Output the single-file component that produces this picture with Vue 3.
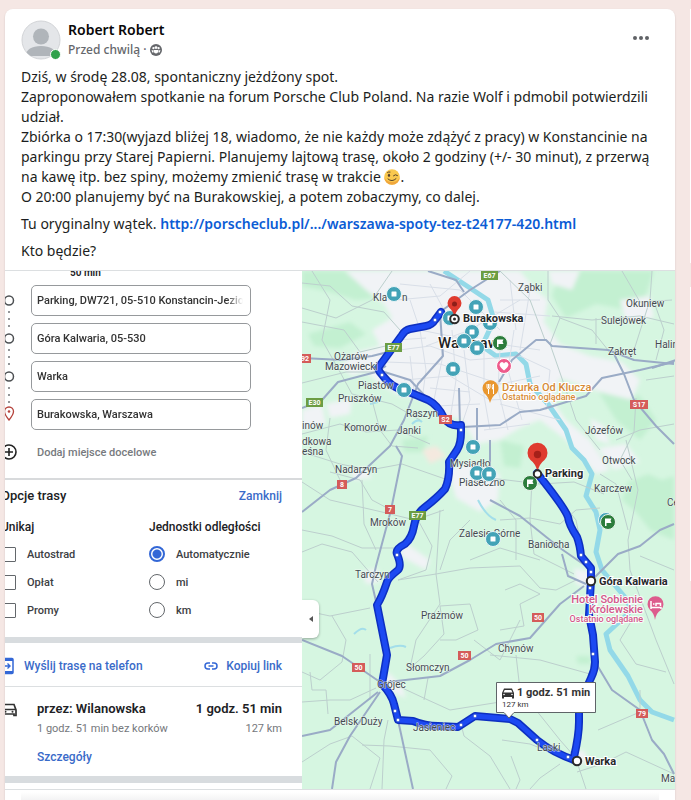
<script setup>
import { ref } from 'vue'

const stops = ref([
  { id: 'stop-1', label: 'Punkt początkowy', value: 'Parking, DW721, 05-510 Konstancin-Jeziorna' },
  { id: 'stop-2', label: 'Przystanek 1', value: 'Góra Kalwaria, 05-530' },
  { id: 'stop-3', label: 'Przystanek 2', value: 'Warka' },
  { id: 'stop-4', label: 'Miejsce docelowe', value: 'Burakowska, Warszawa' },
])
const avoid = ref([])
const avoidOptions = ['Autostrad', 'Opłat', 'Promy']
const unit = ref('Automatycznie')
const unitOptions = ['Automatycznie', 'mi', 'km']

const urban = [
  'M345 271H520L536 290 548 300 544 322 560 344 590 356 622 362 640 380 632 400 600 392 560 378 552 400 566 420 590 440 610 470 596 474 566 440 540 420 520 428 500 440 476 444 462 420 440 414 426 400 400 396 380 384 366 372 352 376 340 366 356 352 380 346 372 330 392 318 384 304 366 290Z',
  'M548 271H580L572 290 552 284Z',
  'M448 470 470 462 500 474 498 500 480 512 456 498Z',
  'M404 542 430 560 426 570 400 556Z',
  'M388 672 402 686 406 698 392 692 384 684Z',
  'M574 568 592 572 590 588 576 584Z',
  'M326 404 352 398 350 414 330 418Z',
  'M620 300 650 296 654 318 626 322Z',
  'M590 418 604 426 610 444 596 440Z',
  'M598 448 626 444 640 462 614 470Z',
  'M362 572 378 568 380 582 366 584Z',
  'M574 752 584 750 588 760 580 766Z',
  'M350 470 366 468 372 478 354 480Z',
  'M302 410 322 404 326 424 302 430Z',
]
const woods = [
  'M302 271H366L384 284 376 298 356 300 330 292 302 286Z',
  'M628 482 648 474 662 480 674 476V540L650 530 636 512 622 500Z',
  'M560 271H654L640 312 596 304 566 318 552 296Z',
  'M500 440 524 446 520 468 504 466Z',
  'M308 334 350 322 366 334 340 348 314 346Z',
  'M576 656 590 656 592 664 578 664Z',
  'M402 440 428 436 424 452 404 452Z',
  'M590 378 612 388 640 396 656 420 640 440 616 420Z',
]
const minorRoads = [
  'M302 283 330 286 352 306 384 312 400 330', 'M302 308 336 318 372 300 392 271', 'M312 271 330 300 322 340 340 372',
  'M302 322 344 330 360 352 394 344', 'M302 383 346 372 382 372', 'M340 372 352 394 392 404 420 420',
  'M302 434 340 424 366 432 398 430 430 444', 'M330 418 326 450 340 480', 'M372 400 380 430 392 446 418 448',
  'M302 452 340 464 370 470 402 464 448 480', 'M302 482 330 500 382 512 415 520 444 510', 'M330 472 360 480 372 500 391 510',
  'M302 530 332 536 362 548 402 548', 'M302 552 322 544 352 552 378 582', 'M362 480 364 524 376 550', 'M418 520 432 546 426 570 398 580',
  'M398 580 436 574 470 568 520 566 540 588', 'M440 510 436 574 440 604 416 640 410 668', 'M470 520 450 540 440 570',
  'M302 610 330 616 370 608', 'M332 616 346 640 342 662 320 680 302 672', 'M310 672 312 690 326 690 328 714',
  'M370 654 370 700', 'M302 702 330 700 350 700 376 688', 'M302 762 330 744 352 736 380 758 370 789',
  'M362 745 390 746 430 750 452 776 446 789', 'M388 720 384 740 382 789', 'M462 728 464 736 490 756 510 789',
  'M398 686 428 700 450 710 500 702 516 690', 'M428 678 424 700', 'M410 668 424 656 444 634 440 606 470 604 478 630 456 640 440 640',
  'M520 620 500 660 474 640', 'M490 655 540 660 590 674', 'M516 655 520 690 560 740 574 756', 'M502 740 530 744 560 756',
  'M511 756 520 780 516 789', 'M505 590 520 584 540 594 520 604 524 626 500 630', 'M540 588 556 590 576 580',
  'M532 480 530 520 534 554 574 574', 'M500 520 530 518 560 524 576 510 600 508', 'M490 478 540 484 574 482 604 494',
  'M560 500 576 520 584 560', 'M616 440 640 430 674 424', 'M552 316 592 320 640 316 674 324', 'M560 318 550 344 566 390 576 420 600 450',
  'M548 271 548 300 560 318 592 330 608 350', 'M652 271 650 300 634 350', 'M596 318 596 344', 'M640 302 672 300', 'M654 302 664 330 656 360',
  'M636 398 634 432 620 460 632 480', 'M646 380 674 376', 'M500 271 530 300 545 340', 'M622 271 640 302', 'M626 440 638 490 628 540 630 570',
  'M600 474 616 484 628 530', 'M598 730 640 712 640 690', 'M577 762 586 789', 'M560 764 540 778 530 789', 'M577 772 602 764 626 752 674 774',
  'M632 620 620 640 636 664 666 672', 'M630 570 656 640 674 684', 'M640 556 674 570', 'M540 560 500 548 470 560', 'M500 500 516 520 516 560',
]
const streets = [
  'M400 284 460 290 500 330', 'M396 300 440 296 470 271', 'M384 352 430 346 470 360 520 356', 'M386 362 440 364 500 384 540 376',
  'M404 380 450 376 490 400 530 398', 'M420 330 426 370 422 400', 'M440 320 442 360 434 400', 'M452 330 456 380 450 420',
  'M464 350 470 400 462 424', 'M484 350 484 396 490 430', 'M500 350 498 390 508 430', 'M514 330 508 370 522 420', 'M426 346 470 330 520 300',
  'M410 300 420 330 470 340 540 350', 'M430 284 444 310', 'M500 300 540 300', 'M510 280 516 330', 'M530 290 520 350', 'M520 356 550 370 546 410',
  'M500 404 560 420', 'M484 430 530 424', 'M396 340 426 338', 'M410 356 414 390', 'M430 388 470 392', 'M436 406 480 404', 'M494 312 550 316',
]
const highways = [
  'M302 358 342 360 372 356 396 350', 'M302 408 322 400 338 382 376 372 386 366', 'M378 370 410 380 440 412 450 426',
  'M302 512 330 490 356 478 390 446 404 420 418 384 443 356 440 312', 'M396 446 402 456 391 510 376 566 372 584 378 610',
  'M463 427 500 425 520 412 540 410 586 396 602 378 640 370 674 362', 'M440 312 470 290 500 271', 'M428 271 456 280 464 292',
  'M499 382 512 360 536 340 546 340 552 346 608 350 634 360 674 364', 'M614 354 624 374 634 400 656 426 674 444',
  'M490 440 490 480M459 388 460 426M477 408 477 440', 'M490 500 520 516 560 548 586 566',
  'M302 640 342 656 380 682', 'M388 682 440 676 470 660 496 644 530 638 560 604 584 586',
  'M594 578 618 554 640 546 660 530 674 524', 'M597 665 612 690 640 710 652 740 664 754 674 774', 'M398 720 413 789',
  'M380 692 350 736 336 762 332 789', 'M302 736 330 730 378 692', 'M562 554 568 576 586 584', 'M676 360 652 368',
]
const river = 'M444 271 470 288 488 300 494 320 482 346 496 356 516 354 526 364 530 384 548 404 566 430 572 448 584 460 592 474 586 496 596 512 600 530 596 552 602 570 624 596 632 610 606 634 610 650 628 676 640 700 652 712 674 720'
const loop = 'M441 312 435 320Q432 325 426 326L410 329Q405 330 402 335L378 368Q379 372 383 376 392 388 404 390L428 400Q438 405 444 418 450 427 461 425L461 432Q461 444 457 450L449 462Q450 478 445 489 437 498 424 508 416 514 414 526 412 538 405 544 395 549 397 554 402 566 398 570 388 578 387 582 382 597 377 605L387 655 382 684Q392 695 394 704L398 720 413 721Q425 726 438 726L458 727 475 716 510 719 518 723 537 740Q553 753 577 761'
const east = 'M574 757Q579 735 579 722V705L591 678Q595 670 595 662L593 635 589 615 591 580V568Q586 562 581 556 580 545 577 537 569 525 568 517 565 508 537 473'

const shields = [
  { x: 481, y: 271, w: 17, text: 'E67', color: '#6c9d43' },
  { x: 385, y: 343, w: 17, text: 'E77', color: '#6c9d43' },
  { x: 306, y: 398, w: 17, text: 'E30', color: '#6c9d43' },
  { x: 409, y: 511, w: 17, text: 'E77', color: '#6c9d43' },
  { x: 299, y: 354, w: 12, text: '92', color: '#d45c5a' },
  { x: 439, y: 415, w: 13, text: 'S2', color: '#d45c5a' },
  { x: 630, y: 400, w: 18, text: 'S17', color: '#d45c5a' },
  { x: 337, y: 480, w: 10, text: '8', color: '#d45c5a' },
  { x: 385, y: 505, w: 10, text: '7', color: '#d45c5a' },
  { x: 352, y: 663, w: 13, text: '50', color: '#d45c5a' },
  { x: 458, y: 651, w: 13, text: '50', color: '#d45c5a' },
  { x: 532, y: 613, w: 12, text: '50', color: '#d45c5a' },
  { x: 636, y: 709, w: 12, text: '79', color: '#d45c5a' },
]
const places = [
  ['Kla', 373, 301], ['n', 402, 301], ['Ząbki', 518, 291], ['Okuniew', 626, 307], ['Sulejówek', 601, 324], ['Zakręt', 608, 355],
  ['Halin', 655, 348], ['Ożarów', 334, 360], ['Mazowiecki', 325, 370], ['Piastów', 358, 389], ['Pruszków', 338, 402],
  ['Raszyn', 406, 417], ['Komorów', 344, 431], ['Janki', 397, 434], ['inów', 302, 429], ['dkowa', 302, 445], ['eśna', 302, 455],
  ['Józefów', 585, 434], ['Otwock', 602, 464], ['Karczew', 594, 492], ['Ce', 667, 506], ['Nadarzyn', 335, 473],
  ['Mysiadło', 450, 467], ['Piaseczno', 459, 486], ['Mroków', 370, 526], ['Zalesie Górne', 459, 537], ['Baniocha', 528, 548],
  ['Tarczyn', 355, 578], ['Prażmów', 421, 619], ['Słomczyn', 406, 671], ['Chynów', 498, 652], ['Grójec', 377, 688],
  ['Belsk Duży', 334, 725], ['Jasieniec', 413, 731], ['Laski', 537, 751], ['Ma', 661, 782],
]
const saved = [[394, 294], [450, 318], [476, 307], [490, 323], [472, 332], [464, 341], [477, 348], [453, 369], [404, 390], [473, 447], [477, 473], [489, 474], [493, 539], [606, 520]]
const flags = [[500, 343], [530, 483], [608, 522]]
const dots = [[440, 312], [435, 320], [382, 375], [461, 430], [397, 555], [395, 711], [398, 720], [461, 725], [475, 716], [537, 740], [568, 757], [593, 654], [590, 588], [591, 572], [586, 562], [581, 555]]
</script>

<template>
  <div class="page">
    <main class="post">
      <header class="post-head">
        <div class="avatar">
          <svg viewBox="0 0 40 40" aria-hidden="true">
            <defs><clipPath id="avatar-clip"><circle cx="20" cy="20" r="19" /></clipPath></defs>
            <circle cx="20" cy="20" r="19" fill="#e4e6e9" stroke="#d2d4d7" />
            <g clip-path="url(#avatar-clip)" fill="#b0b5ba">
              <circle cx="20" cy="16.500" r="8" />
              <path d="M4 36Q6 26 20 26T36 36Z" />
            </g>
          </svg>
          <span class="online"></span>
        </div>
        <div class="who">
          <h1>Robert Robert</h1>
          <p>Przed chwilą ·
            <svg viewBox="0 0 12 12" aria-hidden="true">
              <circle cx="6" cy="6" r="6" fill="#65676b" />
              <g fill="#fff"><circle cx="3.400" cy="4.200" r="1.100" /><circle cx="8.600" cy="4.200" r="1.100" /><circle cx="6" cy="3.600" r="1.400" />
                <path d="M1.500 6.200h2v2.200h-1.200zM10.500 6.200h-2v2.200h1.200zM3.900 5.900h4.200v1.600a2.100 2.100 0 0 1-4.200 0z" /></g>
            </svg>
          </p>
        </div>
        <button class="more" type="button" aria-label="Więcej">
          <svg viewBox="0 0 16 4" aria-hidden="true" fill="#606266"><circle cx="2" cy="2" r="2" /><circle cx="8" cy="2" r="2" /><circle cx="14" cy="2" r="2" /></svg>
        </button>
      </header>

      <section class="body">
        <p>
          Dziś, w środę 28.08, spontaniczny jeżdżony spot.<br>
          Zaproponowałem spotkanie na forum Porsche Club Poland. Na razie Wolf i pdmobil potwierdzili udział.<br>
          Zbiórka o 17:30(wyjazd bliżej 18, wiadomo, że nie każdy może zdążyć z pracy) w Konstancinie na parkingu przy Starej Papierni. Planujemy lajtową trasę, około 2 godziny (+/- 30 minut), z przerwą na kawę itp. bez spiny, możemy zmienić trasę w trakcie
          <svg class="emoji" viewBox="0 0 16 16" role="img" aria-label="mrugnięcie">
            <circle cx="8" cy="8" r="7.800" fill="#f9c84e" />
            <path d="M8 15.800A7.800 7.800 0 0 0 15.800 8Q14 13 8 13T.2 8A7.800 7.800 0 0 0 8 15.800" fill="#f0a63c" />
            <ellipse cx="5" cy="6.300" rx="1.100" ry="1.600" fill="#54402b" />
            <path d="M9.500 6.700Q11.500 4.700 13.500 6.500M4 10Q8 13.500 12 9.700M3.500 3.500Q4.500 2.600 6 3" fill="none" stroke="#54402b" stroke-linecap="round" />
          </svg>.<br>
          O 20:00 planujemy być na Burakowskiej, a potem zobaczymy, co dalej.
        </p>
        <p>Tu oryginalny wątek. <a href="#watek">http://porscheclub.pl/.../warszawa-spoty-tez-t24177-420.html</a></p>
        <p>Kto będzie?</p>
      </section>

      <section class="share">
        <div class="panel">
          <div class="panel-inner">
            <p class="cut">50 min</p>
            <div class="stops">
              <svg class="track" viewBox="0 0 42 145" aria-hidden="true">
                <g fill="none" stroke="#4c4f52" stroke-width="1.500"><circle cx="20" cy="15.500" r="4.500" /><circle cx="20" cy="53.500" r="4.500" /><circle cx="20" cy="91.500" r="4.500" /></g>
                <path d="M20 27v16M20 65v16M20 103v16" stroke="#707377" stroke-width="2" stroke-linecap="round" stroke-dasharray="0 7" />
                <path d="M20 135Q15.500 129.500 15.500 126.500A4.500 4.500 0 0 1 24.500 126.500Q24.500 129.500 20 135Z" fill="none" stroke="#b5433c" stroke-width="1.300" />
                <circle cx="20" cy="126.500" r="1.300" fill="#b5433c" />
              </svg>
              <div class="fields">
                <label v-for="s in stops" :key="s.id" class="field" :for="s.id">
                  <input :id="s.id" v-model="s.value" type="text" :aria-label="s.label">
                </label>
              </div>
            </div>
            <button class="add" type="button">
              <svg viewBox="0 0 16 16" fill="none" stroke="#222" stroke-width="1.600" aria-hidden="true"><circle cx="8" cy="8" r="7" /><path d="M8 4v8M4 8h8" /></svg>
              Dodaj miejsce docelowe
            </button>

            <div class="options">
              <div class="row"><h2>Opcje trasy</h2><button class="link" type="button">Zamknij</button></div>
              <div class="groups">
                <fieldset>
                  <legend>Unikaj</legend>
                  <label v-for="o in avoidOptions" :key="o"><input v-model="avoid" type="checkbox" :value="o">{{ o }}</label>
                </fieldset>
                <fieldset>
                  <legend>Jednostki odległości</legend>
                  <label v-for="o in unitOptions" :key="o"><input v-model="unit" type="radio" name="unit" :value="o">{{ o }}</label>
                </fieldset>
              </div>
            </div>

            <div class="row send">
              <button class="link" type="button">
                <svg class="phone" viewBox="0 0 14 18" fill="none" stroke="#3367d6" aria-hidden="true"><rect x="2" y="1.500" width="11" height="15" rx="1" stroke-width="1.500" /><path d="M2 3h11M2 15h11" stroke-width="2" /><path d="M3 9h7M7.500 6.500 10 9l-2.500 2.500" stroke-width="1.400" /></svg>
                Wyślij trasę na telefon
              </button>
              <button class="link" type="button">
                <svg class="chain" viewBox="0 0 14 8" fill="none" stroke="#3367d6" stroke-width="1.500" aria-hidden="true"><path d="M6 1H4a3 3 0 0 0 0 6h2M8 1h2a3 3 0 0 1 0 6H8M4.500 4h5" /></svg>
                Kopiuj link
              </button>
            </div>

            <div class="result">
              <svg class="car" viewBox="0 0 16 14" aria-hidden="true"><path d="M1 7 3 1.500h10L15 7v5.500h-2V11H3v1.500H1zM1.500 6.500h13" fill="none" stroke="#333" stroke-width="1.700" /><circle cx="4.500" cy="8.700" r="1" fill="#333" /><circle cx="11.500" cy="8.700" r="1" fill="#333" /></svg>
              <div class="result-text">
                <div class="row"><strong>przez: Wilanowska</strong><strong>1 godz. 51 min</strong></div>
                <div class="row muted"><span>1 godz. 51 min bez korków</span><span>127 km</span></div>
                <a class="link" href="#szczegoly">Szczegóły</a>
              </div>
            </div>
          </div>
        </div>

        <div class="map">
          <svg class="canvas" viewBox="302 271 373 518" preserveAspectRatio="xMinYMin slice" role="img" aria-label="Mapa trasy">
            <defs><filter id="soft"><feGaussianBlur stdDeviation="2" /></filter></defs>
            <rect x="302" y="271" width="900" height="900" fill="#d6f6e1" />
            <g filter="url(#soft)">
              <path v-for="d in woods" :key="d" :d="d" fill="#c3f0d1" />
              <path v-for="d in urban" :key="d" :d="d" fill="#f1f3f6" />
              <path d="M422 450 436 446 446 456 430 464Z" fill="#f4e9df" />
            </g>
            <path :d="river" fill="none" stroke="#93d9e8" stroke-width="5" stroke-linejoin="round" />
            <path d="M354 634q8-8 12-4M390 648q10-4 16-1M412 424q6-6 10-2M478 500q8 16 18 20M370 404l8-2" fill="none" stroke="#a3deea" stroke-width="2" />
            <path v-for="d in streets" :key="d" :d="d" fill="none" stroke="#d9dfe8" />
            <path v-for="d in minorRoads" :key="d" :d="d" fill="none" stroke="#bccfcd" stroke-linejoin="round" />
            <path v-for="d in highways" :key="d" :d="d" fill="none" stroke="#9aabc6" stroke-width="2" stroke-linejoin="round" />
            <g fill="none" stroke-linejoin="round" stroke-linecap="round">
              <path :d="loop" stroke="#0d2fc0" stroke-width="8" /><path :d="east" stroke="#0d2fc0" stroke-width="8" />
              <path :d="loop" stroke="#1c49f2" stroke-width="5" /><path :d="east" stroke="#1c49f2" stroke-width="5" />
            </g>
            <circle v-for="d in dots" :key="d.join()" :cx="d[0]" :cy="d[1]" r="1.700" fill="#fff" stroke="#2447b8" stroke-width=".5" />
            <text v-for="p in places" :key="p[0]" class="place" :x="p[1]" :y="p[2]">{{ p[0] }}</text>
            <text class="city" x="438" y="348">Warszawa</text>
            <g v-for="s in shields" :key="s.text + s.x">
              <rect :x="s.x" :y="s.y" :width="s.w" height="9" :fill="s.color" />
              <text class="shield" :x="s.x + s.w / 2" :y="s.y + 7">{{ s.text }}</text>
            </g>

            <g v-for="m in saved" :key="m.join()">
              <circle :cx="m[0]" :cy="m[1]" r="7.500" fill="#43a3b7" stroke="#e9f4f6" />
              <rect :x="m[0] - 2.5" :y="m[1] - 2.5" width="5" height="5" rx=".5" fill="#fff" />
            </g>
            <g v-for="f in flags" :key="f.join()" :transform="`translate(${f[0]} ${f[1]})`">
              <circle r="7.500" fill="#2c7d3c" stroke="#e9f4ec" />
              <path d="M-3 4V-3.500H3.500L2.500-1.200 3.500 1H-1.500V4Z" fill="#fff" />
            </g>
            <circle cx="504" cy="366" r="7.500" fill="#ee5b8c" stroke="#fff" />
            <path d="M504 370.500Q499.500 367 499.500 364.500 500 362 502 362 503.500 362 504 363.500 504.500 362 506 362 508 362 508.500 364.500 508.500 367 504 370.500Z" fill="#fff" />
            <path d="M490 403Q488 396 484 393A8 8 0 1 1 497 393Q492 396 490 403Z" fill="#e9972f" />
            <path d="M487 384v3q0 2 1.500 2v5M490 384v3q0 2-1.500 2M488.500 384v4M493.500 394V384q-2 2-1 5h1" fill="none" stroke="#fff" stroke-width="1" />
            <path d="M655 620Q654 613 650 610A8 8 0 1 1 661 610Q656 613 655 620Z" fill="#dd5c8d" />
            <path d="M651 601v8M651 607.500h10v1.500M653 604h1.500M656 606v-2.500h4.500V606" fill="none" stroke="#fff" stroke-width="1.500" />

            <path d="M454.500 317Q453 311 449.500 308A7 7 0 1 1 459.500 308Q456 311 454.500 317Z" fill="#df3b2f" /><circle cx="454.500" cy="304" r="2.500" fill="#8e1f1a" />
            <path d="M537.500 472Q536 464 530.500 460A10 10 0 1 1 544.500 460Q539 464 537.500 472Z" fill="#df3b2f" /><circle cx="537.500" cy="454.500" r="3.700" fill="#a52019" />
            <g fill="#fff" stroke="#2b2b2b" stroke-width="2"><circle cx="454.500" cy="319" r="4.300" /><circle cx="537.500" cy="474" r="3.700" /><circle cx="591" cy="581" r="4.200" /><circle cx="577" cy="761" r="4.200" /></g>
            <circle cx="454.500" cy="319" r="1.500" fill="#2b2b2b" />
            <g class="stop-name"><text x="463" y="322">Burakowska</text><text x="545" y="477">Parking</text><text x="599" y="585">Góra Kalwaria</text><text x="585" y="765">Warka</text></g>
            <g class="food"><text x="502" y="391">Dziurka Od Klucza</text><text class="tiny" x="502" y="400">Ostatnio oglądane</text></g>
            <g class="hotel"><text x="643" y="603">Hotel Sobienie</text><text x="643" y="613">Królewskie</text><text class="tiny" x="643" y="622">Ostatnio oglądane</text></g>

            <path d="M496.500 682.500H595.500V712.500H514L509 718 504 712.500H496.500Z" fill="#fff" stroke="#5f6468" />
            <path d="M502 693 504 688.500H512L514 693V698.500H512V697H504V698.500H502ZM503.500 692.500H512.500L511.300 690H504.700Z" fill="#333" fill-rule="evenodd" />
            <circle cx="504" cy="694.500" r=".8" fill="#fff" /><circle cx="512" cy="694.500" r=".8" fill="#fff" />
            <text class="tip" x="517" y="696">1 godz. 51 min</text><text class="tip-sub" x="502" y="707">127 km</text>
          </svg>
          <button class="collapse" type="button" aria-label="Zwiń panel">
            <svg viewBox="0 0 4 6" aria-hidden="true"><path d="M4 0v6L0 3z" fill="#555" /></svg>
          </button>
        </div>
      </section>
      <footer></footer>
    </main>
    <aside class="next" aria-hidden="true"><div></div><div></div></aside>
  </div>
</template>

<style>
body { margin: 0; background: #f5e7e4; }
</style>

<style scoped>
* { box-sizing: border-box; }
.page { display: flex; gap: 15px; padding: 9px 0 0 5px; height: 100vh; overflow: hidden; font-family: "Noto Sans", "Open Sans", sans-serif; color: #1c1e21; background: #f5e7e4; }
.post { flex: 1; min-width: 0; display: flex; flex-direction: column; background: #fff; border-radius: 8px 8px 0 0; box-shadow: 0 1px 2px #00000026; }
.next { flex: 0 0 1px; display: flex; flex-direction: column; gap: 24px; overflow: hidden; }
.next div { height: 254px; background: #fff; }
.next div + div { height: 294px; }
h1, h2, p { margin: 0; }
button { border: 0; background: none; padding: 0; font: inherit; color: inherit; cursor: pointer; }
svg { display: block; }

.post-head { display: flex; align-items: center; gap: 7px; padding: 11px 26px 0 16px; }
.avatar { position: relative; width: 40px; height: 40px; }
.avatar svg { width: 40px; height: 40px; }
.online { position: absolute; right: 0; bottom: 0; width: 11px; height: 11px; border: 1px solid #fff; border-radius: 50%; background: #31a24c; }
.who { flex: 1; }
.who h1 { font-size: 14px; line-height: 20px; font-weight: 600; color: #080809; }
.who p { display: flex; align-items: center; gap: 4px; font-size: 12px; line-height: 20px; font-weight: 500; color: #65676b; }
.who svg { width: 12px; height: 12px; }
.more { width: 16px; height: 20px; margin-bottom: 4px; }
.more svg { width: 16px; height: 4px; }

.body { display: flex; flex-direction: column; gap: 7px; padding: 7px 16px 9px; font-size: 14px; line-height: 20px; }
.body a { color: #0b5cd5; font-weight: 600; text-decoration: none; }
.emoji { display: inline-block; width: 16px; height: 16px; vertical-align: -3px; }

.share { display: flex; border-top: 1px solid #dcdfe1; border-bottom: 1px solid #dcdfe1; }
.panel { flex: 0 0 297px; overflow: hidden; font-family: Roboto, sans-serif; font-size: 12px; color: #202124; background: #fff; }
.panel-inner { margin-left: -16px; }
.cut { height: 14px; padding-left: 81px; font-size: 10px; line-height: 4px; font-weight: 600; }
.stops { display: flex; }
.track { width: 42px; height: 145px; }
.fields { flex: 1; display: grid; gap: 7px; padding-right: 51px; }
.field { display: block; height: 31px; padding: 0 7px 0 5px; border: 1px solid #96999c; border-radius: 5px; }
.field input { display: block; width: 100%; height: 29px; border: 0; padding: 0; outline: 0; background: none; font: 500 11px/28px Roboto, sans-serif; color: #333; mask-image: linear-gradient(to right, #000 92%, transparent); }
.add { display: flex; align-items: center; gap: 20px; height: 48px; padding-left: 12px; padding-bottom: 4px; font-size: 11px; font-weight: 500; color: #777a7e; }
.add svg { width: 16px; height: 16px; }
.options { padding: 6px 20px 13px 0; border-top: 2px solid #d8dadc; border-bottom: 6px solid #d8dcdf; }
.row { display: flex; justify-content: space-between; align-items: center; }
h2 { font-size: 13px; line-height: 20px; font-weight: 500; padding-left: 12px; }
.link { display: flex; align-items: center; font-weight: 500; color: #3a6bc9; text-decoration: none; }
.groups { display: grid; grid-template-columns: 148px 1fr; padding: 12px 0 0 12px; }
fieldset { min-width: 0; margin: 0; padding: 0; border: 0; }
legend { padding: 0 0 4px; line-height: 18px; font-weight: 500; }
fieldset label { display: flex; align-items: center; gap: 11px; height: 28px; font-size: 11px; font-weight: 500; color: #3c4043; }
fieldset input { appearance: none; width: 16px; height: 16px; margin: 0; border: 1px solid #63676b; border-radius: 50%; }
fieldset input[type="checkbox"] { width: 15px; height: 15px; border-radius: 1px; }
fieldset input[type="radio"]:checked { border: 2px solid #3367d6; background: radial-gradient(#3367d6 4px, #fff 5px); }
.send { height: 44px; padding: 2px 20px 0 11px; border-bottom: 1px solid #dcdfe1; }
.phone { width: 14px; height: 18px; margin-right: 10px; }
.chain { width: 14px; height: 8px; margin-right: 8px; }
.result { display: flex; gap: 20px; padding: 12px 20px 9px 12px; border-bottom: 7px solid #d8dcdf; margin-bottom: 6px; }
.car { width: 16px; height: 14px; margin-top: 4px; }
.result-text { flex: 1; font-size: 12px; line-height: 20px; }
.result-text strong { font-size: 13px; font-weight: 600; line-height: 20px; }
.muted { font-size: 11px; color: #75787c; }
.result-text .link { padding-top: 8px; }

.map { position: relative; flex: 1; min-width: 0; background: #d6f6e1; overflow: hidden; }
.canvas { position: absolute; inset: 0; width: 100%; height: 100%; font-family: Roboto, sans-serif; }
.place { font-size: 10px; fill: #444a50; stroke: #f4fbf7bb; stroke-width: 1px; paint-order: stroke; }
.city { font-size: 15px; font-weight: 500; fill: #222; stroke: #fff; stroke-width: 2px; paint-order: stroke; }
.shield { font-size: 7px; font-weight: 700; fill: #fff; text-anchor: middle; }
.stop-name { font-size: 11px; font-weight: 700; fill: #26282b; stroke: #fff; stroke-width: 2px; paint-order: stroke; }
.food { font-size: 11px; font-weight: 500; fill: #d68a35; stroke: #fff; stroke-width: 2px; paint-order: stroke; }
.hotel { font-size: 11px; font-weight: 500; fill: #d4588a; stroke: #f6fffa; stroke-width: 2px; paint-order: stroke; text-anchor: end; }
.tiny { font-size: 9px; }
.tip { font-size: 11px; font-weight: 700; fill: #333; }
.tip-sub { font-size: 8px; fill: #333; }
.collapse { position: absolute; left: 0; top: 329px; display: grid; place-items: center; width: 17px; height: 38px; border-radius: 0 6px 6px 0; background: #fff; box-shadow: 0 1px 3px #00000055; }
.collapse svg { width: 4px; height: 6px; }
footer { flex: 1; margin: 0 16px; background: linear-gradient(#fff 20%, #f3f3f4); }
</style>
